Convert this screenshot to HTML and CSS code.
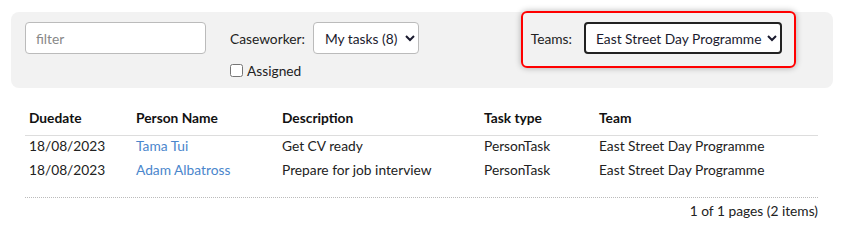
FILE: index.html
```html
<!DOCTYPE html>
<html>
<head>
<meta charset="utf-8">
<link rel="stylesheet" href="styles.css">
</head>
<body>
<div class="page">
  <div class="panel">
    <input class="filter" type="text" placeholder="filter">
    <div class="case">
      <div class="case-row">
        <label class="lbl">Caseworker:</label>
        <select class="sel sel-case"><option>My tasks (8)</option></select>
      </div>
      <label class="assigned"><input type="checkbox" class="chk"><span>Assigned</span></label>
    </div>
    <div class="teams">
      <label class="lbl">Teams:</label>
      <select class="sel sel-team"><option>East Street Day Programme</option></select>
    </div>
  </div>
  <table class="grid">
    <colgroup>
      <col class="c1"><col class="c2"><col class="c3"><col class="c4"><col>
    </colgroup>
    <thead>
      <tr><th>Duedate</th><th>Person Name</th><th>Description</th><th>Task type</th><th>Team</th></tr>
    </thead>
    <tbody>
      <tr><td>18/08/2023</td><td><a href="#">Tama Tui</a></td><td>Get CV ready</td><td>PersonTask</td><td>East Street Day Programme</td></tr>
      <tr><td>18/08/2023</td><td><a href="#">Adam Albatross</a></td><td>Prepare for job interview</td><td>PersonTask</td><td>East Street Day Programme</td></tr>
    </tbody>
  </table>
  <div class="pager">1 of 1 pages (2 items)</div>
</div>
</body>
</html>
```
FILE: styles.css
```css
html, body { margin: 0; padding: 0; background: #fff; }
body { font-family: Lato, "Noto Sans", sans-serif; font-size: 13.75px; color: #222; }
.page { padding: 12px 9px 0 11px; }
.panel {
  background: #f2f2f2;
  border-radius: 8px;
  height: 76px;
  box-sizing: border-box;
  padding: 10px 14px;
  display: flex;
  align-items: flex-start;
}
.filter {
  width: 181px; height: 32px; box-sizing: border-box;
  border: 1px solid #bbb; border-radius: 4px;
  padding: 0 10px; font: inherit; color: #222; background: #fff;
}
.filter::placeholder { color: #888; }
.case { margin-left: 24px; display: flex; flex-direction: column; }
.case-row { display: flex; align-items: center; gap: 8px; }
.lbl { color: #222; }
.sel {
  height: 32px; box-sizing: border-box; font: inherit;
  background: #fff; border-radius: 4px; color: #1a1a2e;
}
.sel-case { width: 106px; border: 1px solid #bbb; padding: 0 1px 0 7px; }
.assigned { display: flex; align-items: center; margin-top: 8px; height: 16px; }
.chk { margin: 0 4px 0 0; width: 13px; height: 13px; }
.teams {
  margin-left: auto; margin-right: 23px; margin-top: -11px;
  border: 2px solid #f00; border-radius: 6px;
  box-shadow: 0 0 6px rgba(0,0,0,0.3);
  padding: 9px 12px 12px 8px;
  display: flex; align-items: center; gap: 12px;
}
.sel-team { width: 198px; border: 2px solid #222; padding: 0 2px 0 6px; }
.grid {
  margin: 19px 15px 0 14px;
  width: 793px; border-collapse: collapse; table-layout: fixed;
}
.c1 { width: 107px; }
.c2 { width: 146px; }
.c3 { width: 202px; }
.c4 { width: 115px; }
.grid th, .grid td { text-align: left; padding: 0 4px; white-space: nowrap; }
.grid th { font-weight: bold; line-height: 22px; padding-bottom: 6px; border-bottom: 1px solid #ddd; color: #111; }
.grid td { line-height: 20px; padding-bottom: 4px; }
.grid a { color: #4a86cc; text-decoration: none; }
.pager {
  margin: 13px 15px 0 14px; width: 793px;
  border-top: 1px dotted #bbb; text-align: right; padding-top: 1px; line-height: 24px;
}
```
